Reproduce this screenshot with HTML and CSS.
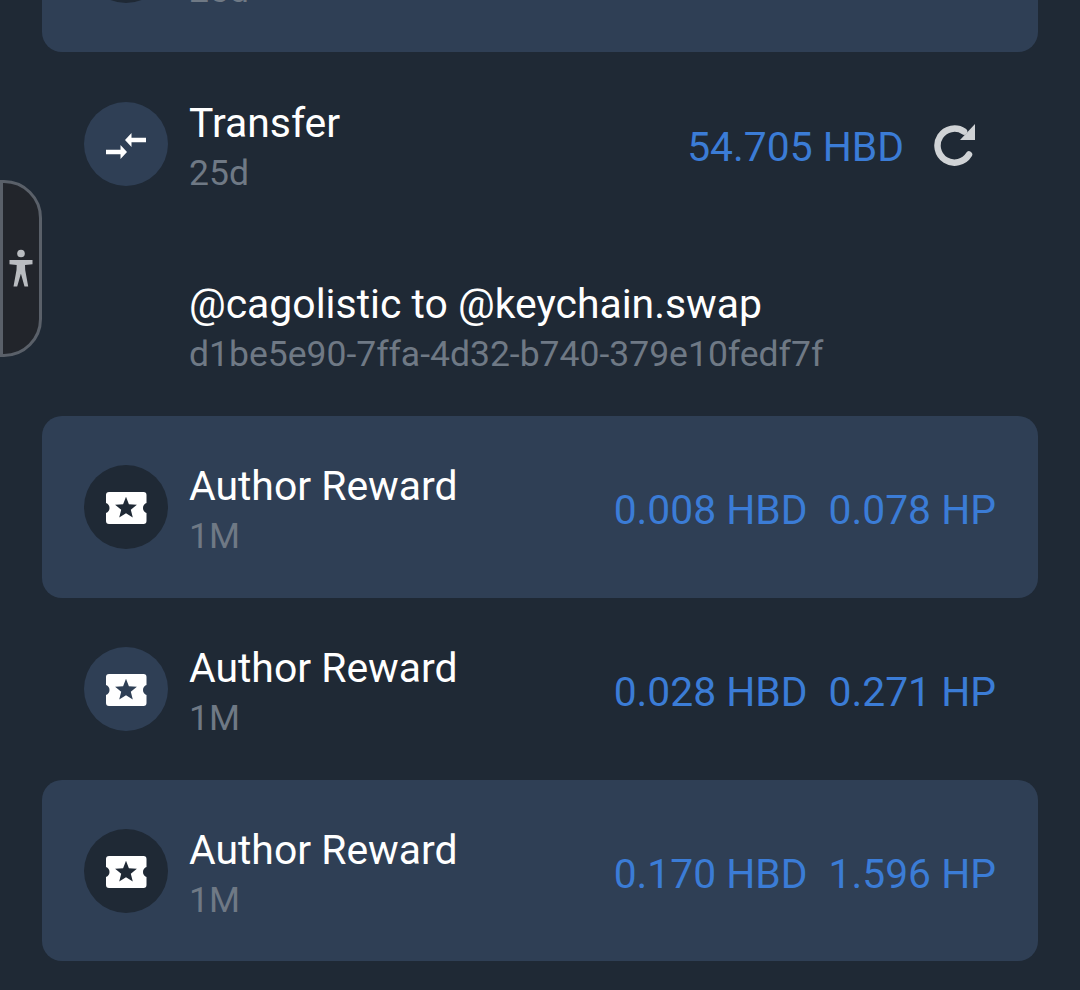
FILE: index.html
```html
<!DOCTYPE html>
<html lang="en">
<head>
    <meta charset="UTF-8">
    <meta name="viewport" content="width=device-width, initial-scale=1.0">
    <title>Wallet History</title>
    <link rel="stylesheet" href="styles.css">
</head>
<body>

    <div class="access-tab">
        <svg class="access-icon" viewBox="0 0 24 38">
            <circle cx="12" cy="4.500" r="3.800"/>
            <path d="M0.500 11h23v4.200l-7.500 .8.200 5 3 16.500h-3.700L12 25h-.2L8.200 37.500H4.500l3-16.500.2-5-7.200-.8z"/>
        </svg>
    </div>

    <div class="list">
        <div class="row card">
            <div class="icon dark">
                <svg viewBox="0 0 84 84"><use href="#ticket"/></svg>
            </div>
            <div class="text">
                <div class="title">Author Reward</div>
                <div class="sub">25d</div>
            </div>
        </div>

        <div class="row first">
            <div class="icon">
                <svg viewBox="0 0 84 84">
                    <path class="arrow" d="M62 35.800v4.400H47.500V45l-6.500-7 6.500-7v4.800z"/>
                    <path class="arrow" d="M22 47.800v4.400h14.500V57l6.500-7-6.500-7v4.800z"/>
                </svg>
            </div>
            <div class="text">
                <div class="title">Transfer</div>
                <div class="sub">25d</div>
            </div>
            <div class="amount">54.705 HBD</div>
            <svg class="refresh" viewBox="0 0 44 44">
                <path class="refresh-arc" d="M36 32.500A17 17 0 1 1 31 9.500"/>
                <path class="refresh-head" d="M42 2v16H27z"/>
            </svg>
        </div>

        <div class="row">
            <div class="icon blank"></div>
            <div class="text">
                <div class="title">@cagolistic to @keychain.swap</div>
                <div class="sub">d1be5e90-7ffa-4d32-b740-379e10fedf7f</div>
            </div>
        </div>

        <div class="row card">
            <div class="icon dark">
                <svg viewBox="0 0 84 84"><use href="#ticket"/></svg>
            </div>
            <div class="text">
                <div class="title">Author Reward</div>
                <div class="sub">1M</div>
            </div>
            <div class="amount">0.008 HBD</div>
            <div class="amount">0.078 HP</div>
        </div>

        <div class="row">
            <div class="icon">
                <svg viewBox="0 0 84 84"><use href="#ticket"/></svg>
            </div>
            <div class="text">
                <div class="title">Author Reward</div>
                <div class="sub">1M</div>
            </div>
            <div class="amount">0.028 HBD</div>
            <div class="amount">0.271 HP</div>
        </div>

        <div class="row card last">
            <div class="icon dark">
                <svg viewBox="0 0 84 84"><use href="#ticket"/></svg>
            </div>
            <div class="text">
                <div class="title">Author Reward</div>
                <div class="sub">1M</div>
            </div>
            <div class="amount">0.170 HBD</div>
            <div class="amount">1.596 HP</div>
        </div>
    </div>

    <svg class="defs" width="0" height="0">
        <defs>
            <path id="ticket" fill="#fff" fill-rule="evenodd" d="M25 27h34.500a3 3 0 0 1 3 3v8a5.500 5.500 0 0 0-3.500 5 5.500 5.500 0 0 0 3.500 5v8a3 3 0 0 1-3 3H25a3 3 0 0 1-3-3v-8a5.500 5.500 0 0 0 3.500-5 5.500 5.500 0 0 0-3.500-5v-8a3 3 0 0 1 3-3zM42 31.800l-2.900 7.500-8 .5 6.100 5-2 7.800 6.800-4.300 6.800 4.300-2-7.800 6.100-5-8-.5z"/>
        </defs>
    </svg>

</body>
</html>
```

FILE: styles.css
```css
html, body {
    height: 100%;
}
body {
    font-family: Roboto, "Noto Sans", sans-serif;
    background-color: #1f2935;
    color: #fff;
    margin: 0;
    overflow: hidden;
    position: relative;
}
.list {
    margin-top: -130px;
    padding: 0 42px;
}
.row {
    display: flex;
    align-items: center;
    height: 182px;
    padding: 0 42px;
    box-sizing: border-box;
}
.row.first {
    padding-top: 2px;
}
.row.last {
    height: 181px;
}
.card {
    background-color: #2f3f55;
    border-radius: 20px;
}
.icon {
    width: 84px;
    height: 84px;
    flex-shrink: 0;
    margin-right: 22px;
    border-radius: 50%;
    background-color: #2f3f55;
}
.icon svg {
    display: block;
    width: 84px;
    height: 84px;
}
.icon.dark {
    background-color: #1f2935;
}
.icon.blank {
    background: none;
}
.arrow {
    fill: #fff;
}
.text {
    flex: 1;
    min-width: 0;
    padding-top: 4px;
    margin-left: -1px;
}
.title {
    font-size: 40.900px;
    line-height: 52px;
}
.sub {
    font-size: 35.500px;
    line-height: 44px;
    margin-top: 2px;
    color: #6f7985;
}
.amount {
    font-size: 40.800px;
    color: #3b7cd6;
    margin-left: 21px;
    padding-top: 6px;
}
.refresh {
    width: 44px;
    height: 44px;
    margin-left: 29px;
    margin-right: 19px;
}
.refresh-arc {
    fill: none;
    stroke: #d0d3d6;
    stroke-width: 6.500;
    stroke-linecap: round;
}
.refresh-head {
    fill: #d0d3d6;
}
.access-tab {
    position: absolute;
    left: 0;
    top: 180px;
    width: 42px;
    height: 177px;
    box-sizing: border-box;
    border: 3px solid #5a6069;
    border-radius: 0 38px 38px 0;
    background-color: #22252b;
    display: flex;
    align-items: center;
    justify-content: center;
    z-index: 2;
}
.access-icon {
    width: 24px;
    height: 38px;
    fill: #b9bcc0;
    margin-top: -2px;
}
.defs {
    position: absolute;
}
```
